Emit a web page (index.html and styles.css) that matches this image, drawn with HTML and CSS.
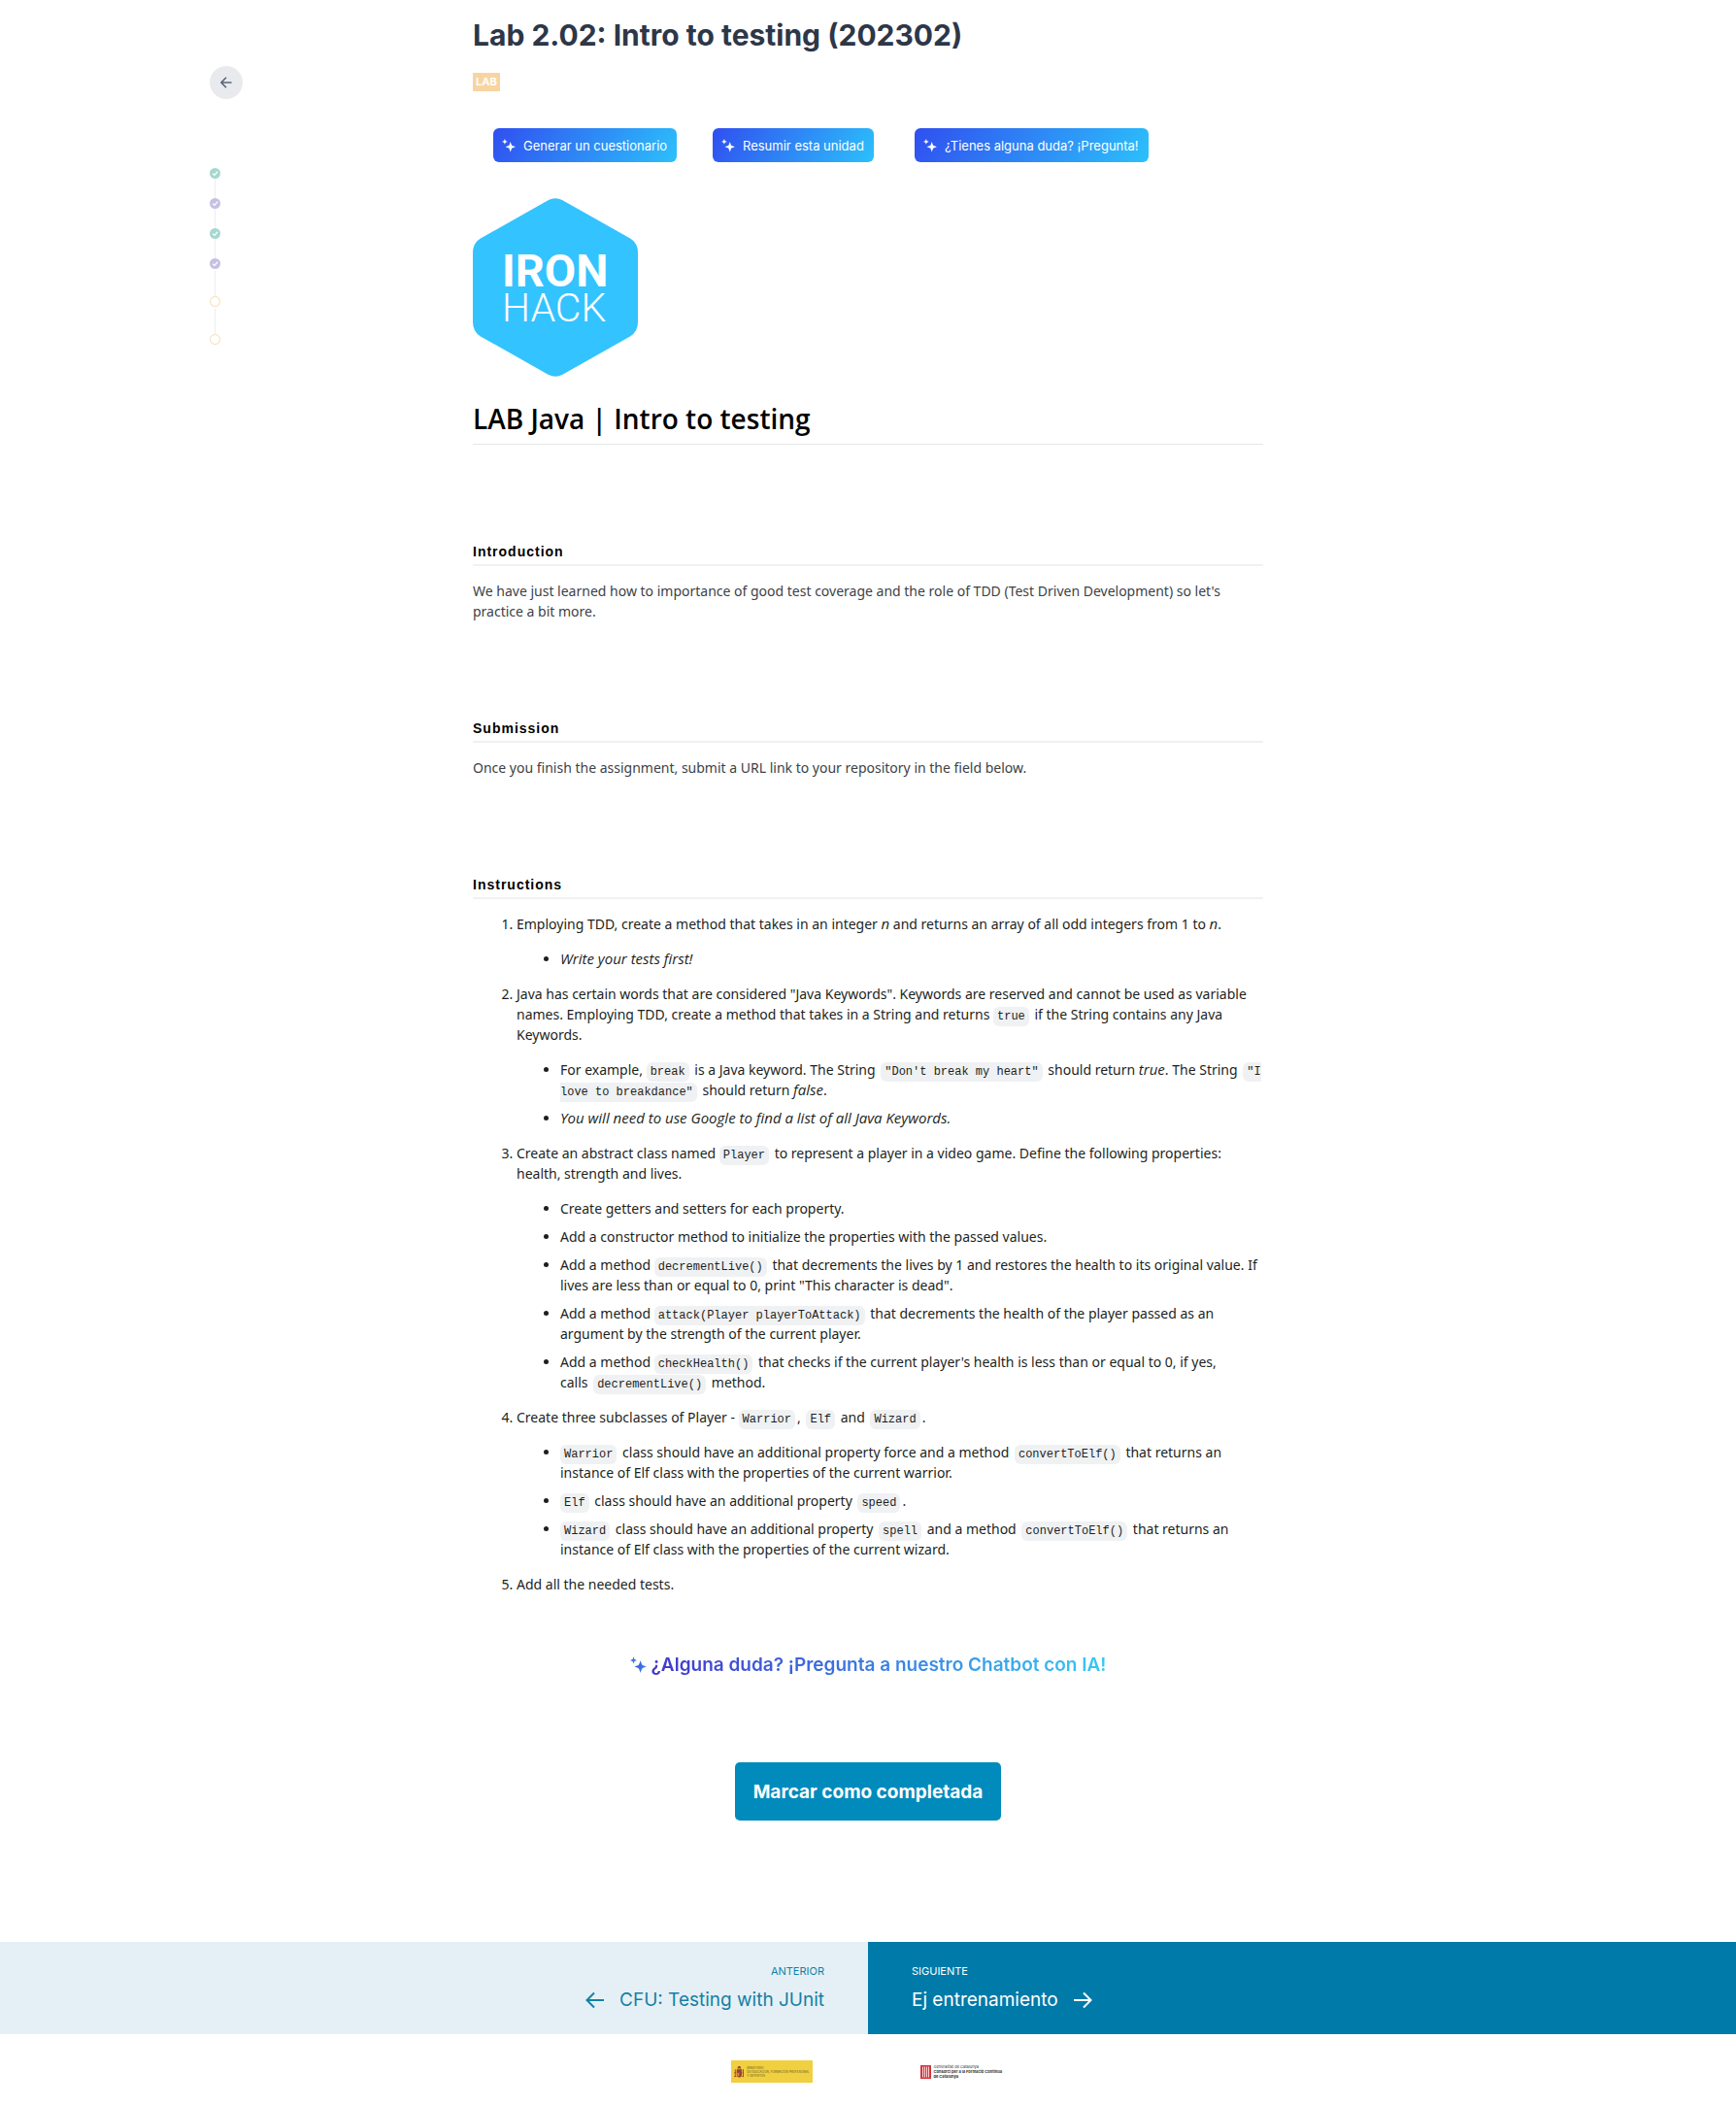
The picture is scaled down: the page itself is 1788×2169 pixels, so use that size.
FILE: index.html
```html
<!DOCTYPE html>
<html lang="es">
<head>
<meta charset="utf-8">
<title>Lab 2.02: Intro to testing (202302)</title>
<link rel="stylesheet" href="styles.css">
</head>
<body>
<svg class="defs" aria-hidden="true">
  <defs>
    <linearGradient id="spark-blue" x1="0" y1="0" x2="1" y2="1"><stop offset="0" stop-color="#3f4fe0"/><stop offset="1" stop-color="#3a8fe8"/></linearGradient>
    <symbol id="sparkles" viewBox="0 0 16 16"><path d="M10 3.500C10.400 4.300 11 7 11.700 7.800C12.500 8.500 15.200 9.100 16 9.500C15.200 9.900 12.500 10.500 11.700 11.200C11 12 10.400 14.700 10 15.500C9.600 14.700 9 12 8.300 11.200C7.500 10.500 4.800 9.900 4 9.500C4.800 9.100 7.500 8.500 8.300 7.800C9 7 9.600 4.300 10 3.500Z"/><path d="M3.300 0L4.200 2.400L6.600 3.300L4.200 4.200L3.300 6.600L2.400 4.200L0 3.300L2.400 2.400Z"/></symbol>
    <symbol id="tick" viewBox="0 0 11 11"><path d="M3 5.600L4.900 7.400L8.200 3.800" fill="none" stroke="#fff" stroke-width="1.300"/></symbol>
  </defs>
</svg>
<div class="page">
  <aside class="rail">
    <button class="back" type="button" aria-label="Volver">
      <svg width="12" height="12" viewBox="0 0 12 12" fill="none" stroke="#5b6478" stroke-width="1.600"><path d="M11.500 6H1M6 .8L.9 6L6 11.200"/></svg>
    </button>
    <ol class="steps">
      <li class="step step-green"><svg><use href="#tick"/></svg></li>
      <li class="step step-purple"><svg><use href="#tick"/></svg></li>
      <li class="step step-green"><svg><use href="#tick"/></svg></li>
      <li class="step step-purple"><svg><use href="#tick"/></svg></li>
      <li class="step step-open"></li>
      <li class="step step-open"></li>
    </ol>
  </aside>
  <main class="content">
    <h1 class="title">Lab 2.02: Intro to testing (202302)</h1>
    <span class="tag">LAB</span>
    <div class="ai-actions">
      <div><button class="ai-button" type="button"><svg><use href="#sparkles"/></svg>Generar un cuestionario</button></div>
      <div><button class="ai-button" type="button"><svg><use href="#sparkles"/></svg>Resumir esta unidad</button></div>
      <div><button class="ai-button" type="button"><svg><use href="#sparkles"/></svg>¿Tienes alguna duda? ¡Pregunta!</button></div>
    </div>
    <svg class="logo" viewBox="0 0 170 184" role="img" aria-label="Ironhack">
      <path fill="#33c3ff" d="M78 2Q85 -1.500 92 2L162 41.500Q170 46.500 170 56V128Q170 137.500 162 142.500L92 182Q85 185.500 78 182L8 142.500Q0 137.500 0 128V56Q0 46.500 8 41.500Z"/>
      <text class="logo-iron" x="30" y="91">IRON</text>
      <text class="logo-hack" x="30" y="127">HACK</text>
    </svg>
    <article class="lesson">
      <h2 class="lesson-title">LAB Java | Intro to testing</h2>
      <h3>Introduction</h3>
      <p>We have just learned how to importance of good test coverage and the role of TDD (Test Driven Development) so let's practice a bit more.</p>
      <h3>Submission</h3>
      <p>Once you finish the assignment, submit a URL link to your repository in the field below.</p>
      <h3>Instructions</h3>
      <ol class="tasks">
        <li>Employing TDD, create a method that takes in an integer <em>n</em> and returns an array of all odd integers from 1 to <em>n</em>.
          <ul>
            <li><em>Write your tests first!</em></li>
          </ul>
        </li>
        <li>Java has certain words that are considered "Java Keywords". Keywords are reserved and cannot be used as variable names. Employing TDD, create a method that takes in a String and returns <code>true</code> if the String contains any Java Keywords.
          <ul>
            <li>For example, <code>break</code> is a Java keyword. The String <code>"Don't break my heart"</code> should return <em>true</em>. The String <code>"I love to breakdance"</code> should return <em>false</em>.</li>
            <li><em>You will need to use Google to find a list of all Java Keywords.</em></li>
          </ul>
        </li>
        <li>Create an abstract class named <code>Player</code> to represent a player in a video game. Define the following properties: health,&nbsp;strength and lives.
          <ul>
            <li>Create getters and setters for each property.</li>
            <li>Add a constructor method to initialize the properties with the passed values.</li>
            <li>Add a method <code>decrementLive()</code> that decrements the lives by 1 and restores the health to its original value. If lives are less than or equal to 0, print "This character is dead".</li>
            <li>Add a method <code>attack(Player playerToAttack)</code> that decrements the health of the player passed as an argument by the strength of the current player.</li>
            <li>Add a method <code>checkHealth()</code> that checks if the current player's health is less than or equal to 0, if yes, calls&nbsp;<code>decrementLive()</code> method.</li>
          </ul>
        </li>
        <li>Create three subclasses of Player - <code>Warrior</code>, <code>Elf</code> and <code>Wizard</code>.
          <ul>
            <li><code>Warrior</code> class should have an additional property force and a method <code>convertToElf()</code> that returns an instance of Elf class with the properties of the current warrior.</li>
            <li><code>Elf</code> class should have an additional property <code>speed</code>.</li>
            <li><code>Wizard</code> class should have an additional property <code>spell</code> and a method <code>convertToElf()</code> that returns an instance of Elf class with the properties of the current wizard.</li>
          </ul>
        </li>
        <li>Add all the needed tests.</li>
      </ol>
    </article>
    <div class="closing">
      <a class="chatbot" href="#chatbot"><svg fill="url(#spark-blue)"><use href="#sparkles"/></svg><span>¿Alguna duda? ¡Pregunta a nuestro Chatbot con IA!</span></a>
      <button class="complete" type="button">Marcar como completada</button>
    </div>
  </main>
</div>
<nav class="pager">
  <a class="pager-link pager-prev" href="#anterior">
    <span class="pager-label">ANTERIOR</span>
    <span class="pager-name"><svg viewBox="0 0 20 20"><path d="M19 10H2M9 2.500L1.500 10L9 17.500"/></svg>CFU: Testing with JUnit</span>
  </a>
  <a class="pager-link pager-next" href="#siguiente">
    <span class="pager-label">SIGUIENTE</span>
    <span class="pager-name">Ej entrenamiento<svg viewBox="0 0 20 20"><path d="M1 10H18M11 2.500L18.500 10L11 17.500"/></svg></span>
  </a>
</nav>
<footer class="sponsors">
  <div class="ministry">
    <svg width="16" height="18" viewBox="0 0 14 17"><path fill="#9c4a2c" d="M5 1.500L7 .3L9 1.500L9.500 4H4.500Z"/><path fill="#a8382a" d="M3.500 5H10.500V12Q10.500 15 7 16Q3.500 15 3.500 12Z"/><path fill="#7a5560" d="M7 5H10.500V9.500H7Z"/><path fill="#c98b3a" d="M3.500 9.500H7V14H5Z"/><path fill="#8e5a3a" d="M1 5H2.300V15H1ZM11.700 5H13V15H11.700Z"/><path stroke="#b03a2a" d="M0 9.500H3M11 9.500H14M0 14.500H3.500M10.500 14.500H14"/></svg>
    <span>MINISTERIO<br>DE EDUCACIÓN, FORMACIÓN PROFESIONAL<br>Y DEPORTES</span>
  </div>
  <div class="generalitat">
    <svg width="11" height="14" viewBox="0 0 11 14"><path fill="#d9343c" d="M0 0H11V14H0Z"/><path stroke="#fff" stroke-width=".8" d="M2.500 1.500V12.500M4.500 1.500V12.500M6.500 1.500V12.500M8.500 1.500V12.500"/></svg>
    <span>Generalitat de Catalunya<br><b>Consorci per a la Formació Contínua<br>de Catalunya</b></span>
  </div>
</footer>
</body>
</html>
```
FILE: styles.css
```css
* { box-sizing: border-box; }
body { margin: 0; background: #fff; font-family: Inter, "Liberation Sans", sans-serif; color: #2d3748; }
button { font: inherit; border: 0; cursor: pointer; }
a { text-decoration: none; }
.defs { position: absolute; width: 0; height: 0; }

.page { display: grid; grid-template-columns: 1fr minmax(0, 814px) 1fr; }

.rail { padding: 68px 0 0 216px; }
.back { display: flex; align-items: center; justify-content: center; width: 34px; height: 34px; padding: 0; border-radius: 50%; background: #e8eaed; }
.steps { display: flex; flex-direction: column; width: 11px; margin: 71px 0 0; padding: 0; list-style: none; }
.step { height: 11px; margin-bottom: 20px; border-radius: 50%; position: relative; }
.step svg { display: block; width: 11px; height: 11px; }
.step + .step::before { content: ""; position: absolute; left: 5px; bottom: 100%; width: 1px; height: 20px; background: #ededf2; }
.step-green { background: #a5d8cf; }
.step-purple { background: #c6c0e2; }
.step-open { margin: 8px 0 20px; border: 1px solid #f5dcaa; background: #fff; }
.step + .step-open::before { left: 4px; height: 27px; }

.content { padding-top: 14px; }
.title { margin: 0; font-size: 30px; line-height: 44px; font-weight: 700; }
.tag { display: block; width: max-content; margin-top: 17px; padding: 0 3px; background: #f8d5a0; color: #fff; font-size: 11px; line-height: 19px; font-weight: 700; }
.ai-actions { display: grid; grid-template-columns: 226px 208px 1fr; margin: 38px 0 0 21px; }
.ai-button { display: flex; align-items: center; gap: 8px; height: 35px; padding: 0 10px 0 9px; border-radius: 6px; background: linear-gradient(120deg, #304ff0, #2cc0fb); color: #fff; font-size: 13px; white-space: nowrap; }
.ai-button svg { width: 14px; height: 14px; fill: #fff; }

.logo { display: block; width: 170px; height: 184px; margin-top: 37px; fill: #fff; }
.logo-iron { font: 700 47px Roboto, sans-serif; }
.logo-hack { font: 300 41px Roboto, sans-serif; }

.lesson { font-family: "Noto Sans", "Open Sans", sans-serif; font-size: 14px; line-height: 21px; color: #1c1f22; }
.lesson-title { margin: 23px 0 0; padding-bottom: 6px; border-bottom: 1px solid #e4e8ea; font-family: "Open Sans", sans-serif; font-size: 28px; line-height: 40px; font-weight: 600; color: #000; }
.lesson h3 { margin: 100px 0 15px; padding-bottom: 3px; border-bottom: 2px solid #eff1f2; font: 700 14px/20px "Liberation Sans", Arial, sans-serif; letter-spacing: 1px; color: #000; }
.lesson p { margin: 0; color: #3d4246; }
.lesson em { font-family: "Open Sans", sans-serif; font-size: 15px; line-height: 20px; }
.tasks { margin: 0; padding-left: 45px; }
.tasks ul { margin: 15px 0; padding-left: 45px; list-style: disc; }
.tasks ul li + li { margin-top: 8px; }
.lesson code { margin: 0 2px; padding: 3px 4px; border-radius: 6px; background: #eff1f3; font: 12px/16px "Liberation Mono", monospace; }
.lesson li > code:first-child { margin-left: 0; }

.closing { display: flex; flex-direction: column; align-items: center; }
.chatbot { display: flex; align-items: center; gap: 5px; margin-top: 61px; font-size: 19px; line-height: 24px; font-weight: 600; }
.chatbot svg { width: 17px; height: 20px; }
.chatbot span { background: linear-gradient(90deg, #4338ca, #3b6fe0 40%, #38c8f4); background-clip: text; color: transparent; }
.complete { height: 60px; margin-top: 88px; padding: 0 19px; border-radius: 5px; background: #008bbc; color: #fff; font-size: 19px; font-weight: 700; }

.pager { display: grid; grid-template-columns: 1fr 1fr; margin-top: 125px; }
.pager-link { display: flex; flex-direction: column; gap: 8px; padding: 22px 45px 21px; }
.pager-prev { align-items: flex-end; background: #e5f0f6; color: #1480a6; }
.pager-next { background: #007aa8; color: #fff; }
.pager-label { font-size: 11px; line-height: 16px; }
.pager-name { display: flex; align-items: center; gap: 15px; font-size: 19px; line-height: 28px; }
.pager-name svg { width: 20px; height: 20px; fill: none; stroke: currentColor; stroke-width: 2; }

.sponsors { display: grid; grid-template-columns: 1fr 1fr; column-gap: 111px; padding: 27px 4px 24px 0; font-size: 4px; line-height: 5px; color: #333; }
.ministry { display: flex; align-items: center; gap: 3px; justify-self: end; width: 84px; height: 23px; padding: 0 3px; background: #f0d040; font-size: 3px; line-height: 4px; white-space: nowrap; color: #6b5a20; }
.generalitat { display: flex; align-items: center; gap: 3px; }
```
